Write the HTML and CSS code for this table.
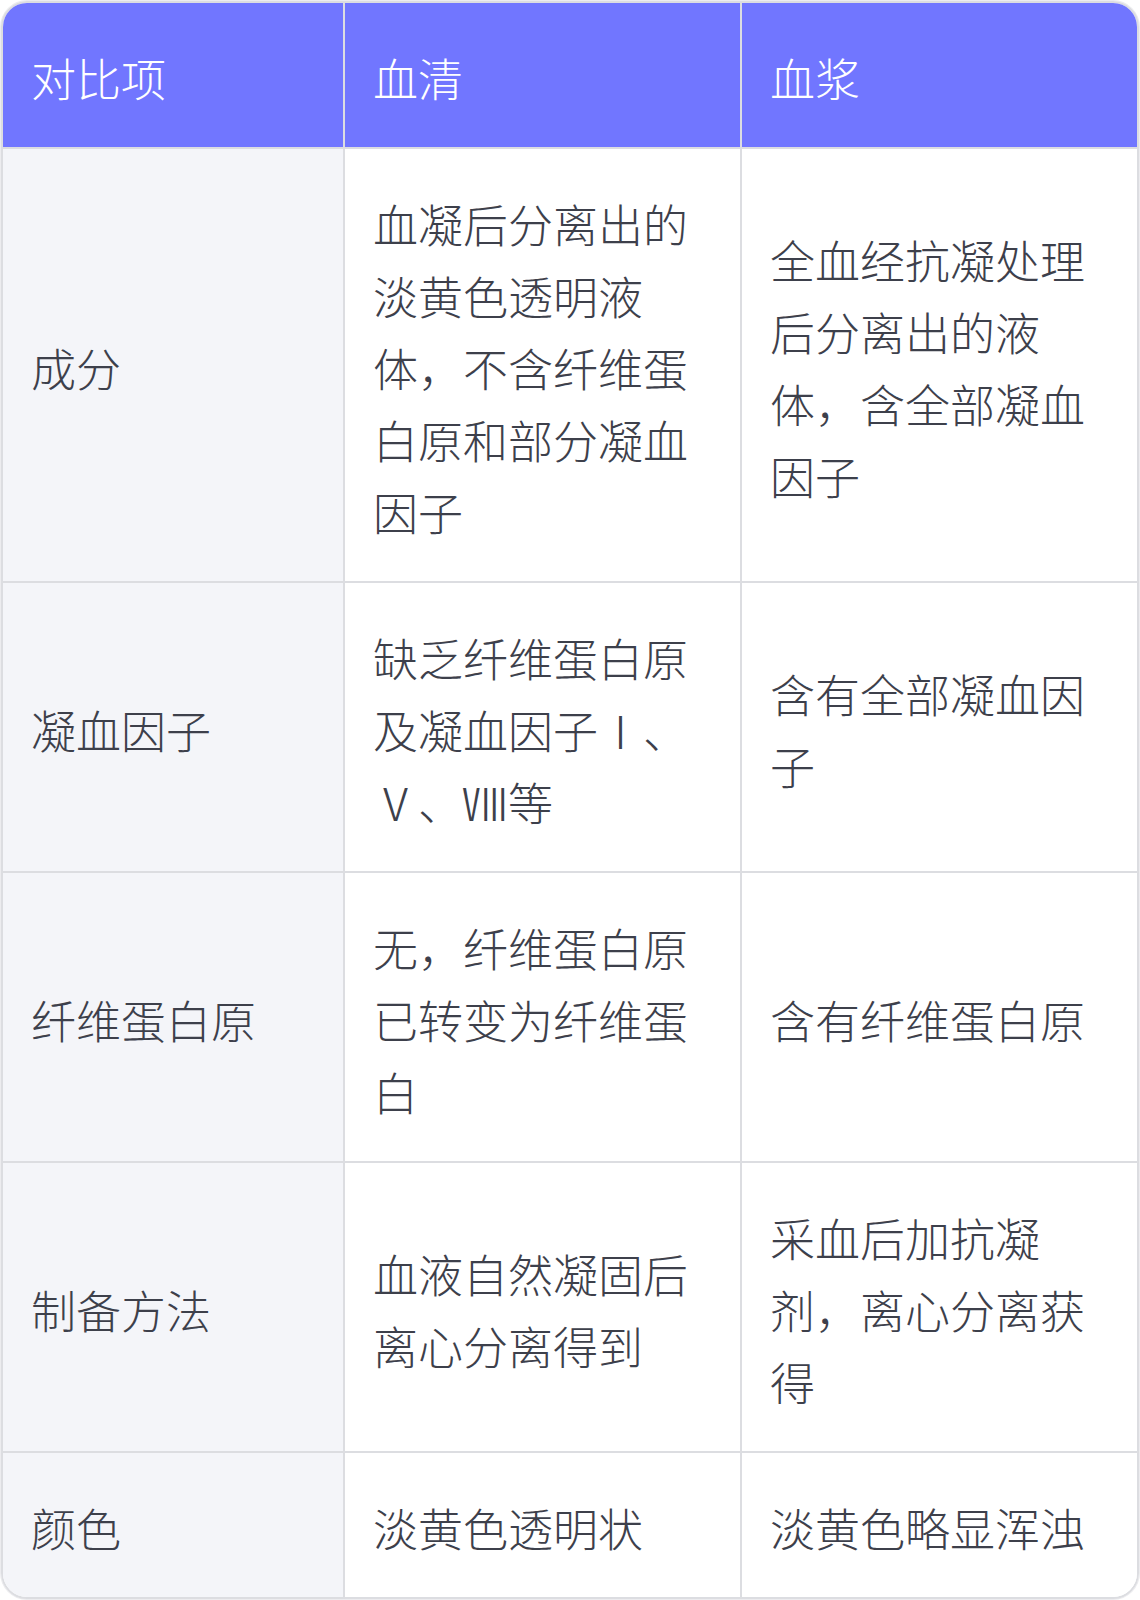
FILE: index.html
```html
<!DOCTYPE html>
<html lang="zh-CN">
<head>
<meta charset="utf-8">
<title>血清与血浆对比</title>
<link rel="stylesheet" href="styles.css">
</head>
<body>
<div class="card">
  <table class="compare">
    <thead>
      <tr>
        <th class="c1">对比项</th>
        <th class="c2">血清</th>
        <th class="c3">血浆</th>
      </tr>
    </thead>
    <tbody>
      <tr>
        <td class="c1 label">成分</td>
        <td class="c2">血凝后分离出的淡黄色透明液体，不含纤维蛋白原和部分凝血因子</td>
        <td class="c3">全血经抗凝处理后分离出的液体，含全部凝血因子</td>
      </tr>
      <tr>
        <td class="c1 label">凝血因子</td>
        <td class="c2">缺乏纤维蛋白原及凝血因子Ⅰ、Ⅴ、Ⅷ等</td>
        <td class="c3">含有全部凝血因子</td>
      </tr>
      <tr>
        <td class="c1 label">纤维蛋白原</td>
        <td class="c2">无，纤维蛋白原已转变为纤维蛋白</td>
        <td class="c3">含有纤维蛋白原</td>
      </tr>
      <tr>
        <td class="c1 label">制备方法</td>
        <td class="c2">血液自然凝固后离心分离得到</td>
        <td class="c3">采血后加抗凝剂，离心分离获得</td>
      </tr>
      <tr class="last">
        <td class="c1 label">颜色</td>
        <td class="c2">淡黄色透明状</td>
        <td class="c3">淡黄色略显浑浊</td>
      </tr>
    </tbody>
  </table>
</div>
</body>
</html>
```

FILE: styles.css
```css
html, body {
  margin: 0;
  padding: 0;
  background: #ffffff;
}

body {
  font-family: "Noto Sans CJK SC", "Noto Sans", sans-serif;
}

.card {
  margin: 1px;
  border: 2px solid #dcdde1;
  border-radius: 26px;
  overflow: hidden;
  box-shadow: 0 0 0 1px #ececef;
}

.compare {
  width: 100%;
  border-collapse: separate;
  border-spacing: 0;
  table-layout: fixed;
}

.compare th,
.compare td {
  box-sizing: border-box;
  padding: 39px 28px 33px;
  font-size: 45px;
  line-height: 72px;
  font-weight: 300;
  text-align: left;
  vertical-align: middle;
  border-right: 2px solid #dcdde1;
  border-bottom: 2px solid #dcdde1;
}

.compare .c1 { width: 342px; }
.compare .c2 { width: 397px; }
.compare .c3 { border-right: none; }

.compare thead th {
  background: #7176ff;
  color: #ffffff;
}

.compare td {
  color: #3d404b;
  background: #ffffff;
}

.compare td.label {
  background: #f4f5f9;
}

.compare tr.last td {
  border-bottom: none;
}
```
